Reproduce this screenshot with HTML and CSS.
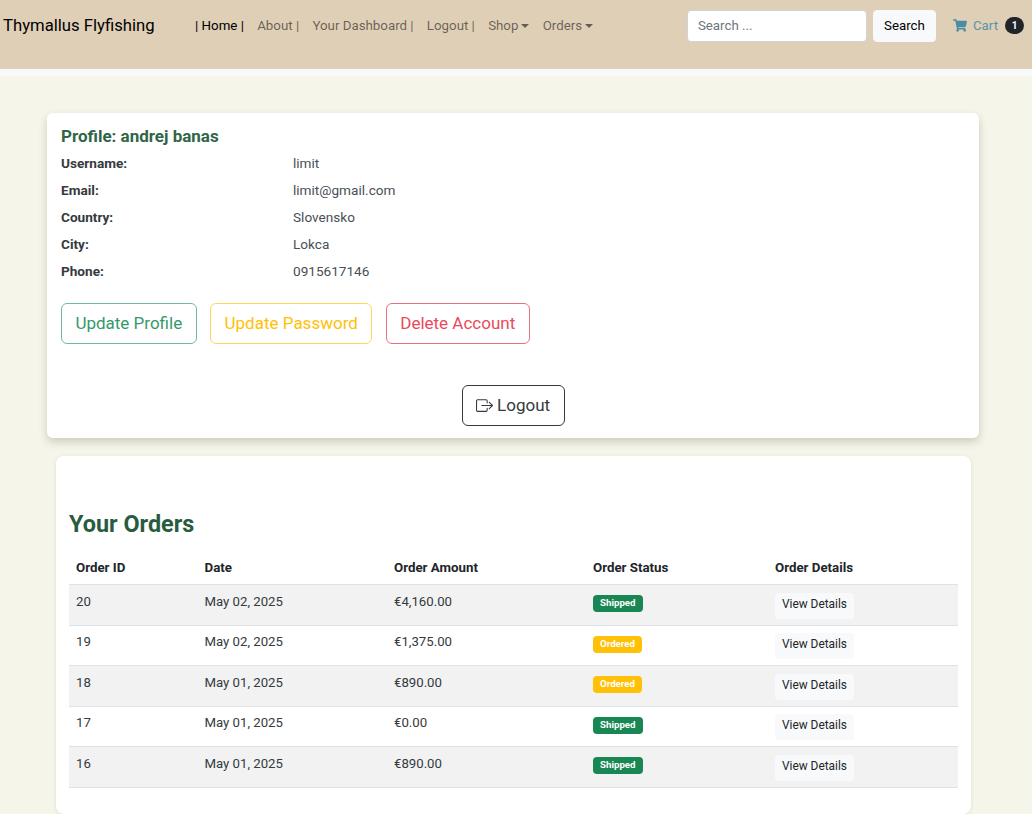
FILE: index.html
```html
<!DOCTYPE html>
<html lang="en">
<head>
<meta charset="utf-8">
<title>Thymallus Flyfishing</title>
<link rel="stylesheet" href="styles.css">
</head>
<body>
<nav class="navbar">
  <a class="brand" href="#">Thymallus Flyfishing</a>
  <ul class="nav-links">
    <li><a class="nav-link active" href="#">| Home |</a></li>
    <li><a class="nav-link" href="#">About |</a></li>
    <li><a class="nav-link" href="#">Your Dashboard |</a></li>
    <li><a class="nav-link" href="#">Logout |</a></li>
    <li><a class="nav-link caret" href="#">Shop</a></li>
    <li><a class="nav-link caret" href="#">Orders</a></li>
  </ul>
  <form class="search">
    <input class="search-input" type="text" placeholder="Search ...">
    <button class="search-btn" type="button">Search</button>
  </form>
  <a class="cart" href="#">
    <svg class="cart-icon" viewBox="0 0 576 512" aria-hidden="true"><path fill="currentColor" d="M528 301.300l47.300-208C578.700 78.300 567.300 64 551.900 64H159.200l-9.200-44.800C147.800 8 137.900 0 126.500 0H24C10.700 0 0 10.700 0 24v16c0 13.300 10.700 24 24 24h69.900l70.200 343.400C147.300 417.100 136 435.200 136 456c0 30.900 25.100 56 56 56s56-25.100 56-56c0-15.700-6.400-29.800-16.800-40h209.600C430.400 426.200 424 440.300 424 456c0 30.900 25.100 56 56 56s56-25.100 56-56c0-22.200-12.900-41.300-31.600-50.400l5.500-24.300c3.400-15-8-29.300-23.400-29.300H218.100l-6.500-32h293c11.200 0 20.900-7.800 23.400-18.700z"/></svg>
    <span class="cart-label">Cart</span>
    <span class="cart-badge">1</span>
  </a>
</nav>
<div class="nav-strip"></div>

<main class="page">
  <section class="profile-card">
    <h5 class="profile-title">Profile: andrej banas</h5>
    <dl class="info">
      <dt>Username:</dt><dd>limit</dd>
      <dt>Email:</dt><dd>limit@gmail.com</dd>
      <dt>Country:</dt><dd>Slovensko</dd>
      <dt>City:</dt><dd>Lokca</dd>
      <dt>Phone:</dt><dd>0915617146</dd>
    </dl>
    <div class="actions">
      <a class="btn btn-green" href="#">Update Profile</a>
      <a class="btn btn-yellow" href="#">Update Password</a>
      <a class="btn btn-red" href="#">Delete Account</a>
    </div>
    <div class="logout-row">
      <a class="btn btn-dark" href="#">
        <svg class="logout-icon" viewBox="0 0 16 16" aria-hidden="true"><path fill="currentColor" fill-rule="evenodd" d="M10 12.500a.5.500 0 0 1-.5.500h-8a.5.500 0 0 1-.5-.500v-9a.5.500 0 0 1 .5-.500h8a.5.500 0 0 1 .5.500v2a.5.500 0 0 0 1 0v-2A1.500 1.500 0 0 0 9.500 2h-8A1.500 1.500 0 0 0 0 3.500v9A1.500 1.500 0 0 0 1.500 14h8a1.500 1.500 0 0 0 1.500-1.500v-2a.5.500 0 0 0-1 0v2z"/><path fill="currentColor" fill-rule="evenodd" d="M15.854 8.354a.5.500 0 0 0 0-.708l-3-3a.5.500 0 0 0-.708.708L14.293 7.500H5.500a.5.500 0 0 0 0 1h8.793l-2.147 2.146a.5.500 0 0 0 .708.708l3-3z"/></svg>Logout</a>
    </div>
  </section>

  <section class="orders-card">
    <h3 class="orders-title">Your Orders</h3>
    <table class="orders">
      <thead>
        <tr><th class="c1">Order ID</th><th class="c2">Date</th><th class="c3">Order Amount</th><th class="c4">Order Status</th><th>Order Details</th></tr>
      </thead>
      <tbody>
        <tr><td>20</td><td>May 02, 2025</td><td>€4,160.00</td><td><span class="badge shipped">Shipped</span></td><td><a class="details" href="#">View Details</a></td></tr>
        <tr><td>19</td><td>May 02, 2025</td><td>€1,375.00</td><td><span class="badge ordered">Ordered</span></td><td><a class="details" href="#">View Details</a></td></tr>
        <tr><td>18</td><td>May 01, 2025</td><td>€890.00</td><td><span class="badge ordered">Ordered</span></td><td><a class="details" href="#">View Details</a></td></tr>
        <tr><td>17</td><td>May 01, 2025</td><td>€0.00</td><td><span class="badge shipped">Shipped</span></td><td><a class="details" href="#">View Details</a></td></tr>
        <tr><td>16</td><td>May 01, 2025</td><td>€890.00</td><td><span class="badge shipped">Shipped</span></td><td><a class="details" href="#">View Details</a></td></tr>
      </tbody>
    </table>
  </section>
</main>
</body>
</html>
```

FILE: styles.css
```css
* { box-sizing: border-box; }
html, body { height: 100%; }
body {
  margin: 0;
  height: 814px;
  overflow: hidden;
  background: #f5f5e9;
  font-family: Roboto, "Liberation Sans", sans-serif;
  font-size: 14px;
  color: #212529;
}
a { text-decoration: none; color: inherit; }

.navbar {
  height: 69px;
  background: #dfcfb6;
  display: flex;
  align-items: flex-start;
  padding: 10px 8px 0 3px;
}
.brand { font-size: 16.700px; line-height: 31px; color: #000; margin-right: 33.700px; white-space: nowrap; }
.nav-links { display: flex; list-style: none; margin: 0; padding: 0; flex: 1; }
.nav-link { display: block; padding: 0 6.650px; font-size: 13.300px; line-height: 31px; color: rgba(0,0,0,.55); white-space: nowrap; }
.nav-link.active { color: #000; }
.caret::after {
  content: "";
  display: inline-block;
  margin-left: 3px;
  vertical-align: 2px;
  border-top: 4px solid;
  border-left: 4px solid transparent;
  border-right: 4px solid transparent;
}
.search { display: flex; gap: 6px; }
.search-input {
  width: 180px;
  height: 32px;
  padding: 3px 10px 4px;
  font: 13.300px Roboto, sans-serif;
  color: #212529;
  background: #fff;
  border: 1px solid #ced4da;
  border-radius: 4px;
}
.search-input::placeholder { color: #6c757d; }
.search-btn {
  height: 32px;
  padding: 0 0 2px;
  width: 63px;
  font: 13.300px Roboto, sans-serif;
  color: #000;
  background: #f8f9fa;
  border: 1px solid #f8f9fa;
  border-radius: 4px;
}
.cart { display: flex; align-items: center; height: 31px; margin-left: 17px; color: #5b93a3; font-size: 13.300px; }
.cart-icon { width: 14px; height: 13px; margin-right: 6px; color: #4a8ca3; }
.cart-label { margin-right: 7px; }
.cart-badge {
  display: block;
  width: 19px;
  height: 17px;
  border-radius: 9px;
  background: #212529;
  color: #fff;
  font-size: 10px;
  font-weight: 700;
  line-height: 17px;
  text-align: center;
}
.nav-strip { height: 7px; background: #f8f9fa; }

.page { padding: 37px 53px 0 47px; }
.profile-card {
  height: 325px;
  padding: 14px 14px 0;
  background: #fff;
  border-radius: 6px;
  box-shadow: 0 4px 8px rgba(60,70,40,.22);
}
.profile-title { margin: 0; font-size: 17px; font-weight: 700; line-height: 19px; color: #2f6647; }
.info { display: grid; grid-template-columns: 232px 1fr; grid-auto-rows: 27.200px; margin: 3.600px 0 0; font-size: 13.600px; line-height: 27px; }
.info dt { font-weight: 700; color: #343a40; }
.info dd { margin: 0; color: #495057; }
.actions { display: flex; gap: 13.600px; margin-top: 17.500px; }
.btn {
  display: inline-block;
  height: 41px;
  padding: 0 13.400px;
  font-size: 17px;
  line-height: 38px;
  background: #fff;
  border: 1px solid;
  border-radius: 6px;
  white-space: nowrap;
}
.btn-green { color: #35996b; border-color: #76b99a; }
.btn-yellow { color: #ffc107; border-color: #ffd660; }
.btn-red { color: #e94a5b; border-color: #e9707e; }
.btn-dark { color: #343a40; border-color: #343a40; }
.logout-row { display: flex; justify-content: center; margin-top: 41px; }
.logout-icon { width: 17px; height: 17px; margin-right: 4.200px; vertical-align: -3px; }

.orders-card {
  width: 915px;
  height: 358px;
  margin: 18px 0 0 9px;
  padding: 54px 13px 0;
  background: #fff;
  border-radius: 8px;
  box-shadow: 0 1px 4px rgba(60,70,40,.12);
}
.orders-title { margin: 0 0 13px; font-size: 23.400px; font-weight: 700; line-height: 28px; color: #285c40; }
.orders { width: 100%; border-collapse: collapse; font-size: 13.200px; color: #343a40; table-layout: fixed; }
.orders th { padding: 9px 7px 9.300px; text-align: left; font-size: 13.300px; line-height: 15px; font-weight: 700; color: #212529; border-bottom: 1px solid #dee2e6; }
.orders td { height: 40.500px; padding: 7.500px 7px 6px; vertical-align: top; line-height: 18px; border-bottom: 1px solid #dee2e6; }
.c1 { width: 128.500px; }
.c2 { width: 189.500px; }
.c3 { width: 199px; }
.c4 { width: 182px; }
.orders tbody tr:nth-child(odd) td { background: #f2f2f2; }
.badge {
  display: inline-block;
  padding: 0 7px;
  height: 17px;
  border-radius: 4px;
  color: #fff;
  font-size: 9.700px;
  font-weight: 700;
  line-height: 16px;
  vertical-align: top;
  margin-top: 2.500px;
}
.shipped { background: #198754; }
.ordered { background: #ffc107; }
.details {
  display: block;
  width: 79px;
  height: 26px;
  text-align: center;
  background: #f8f9fa;
  border-radius: 4px;
  color: #212529;
  font-size: 11.900px;
  line-height: 23px;
}
```
